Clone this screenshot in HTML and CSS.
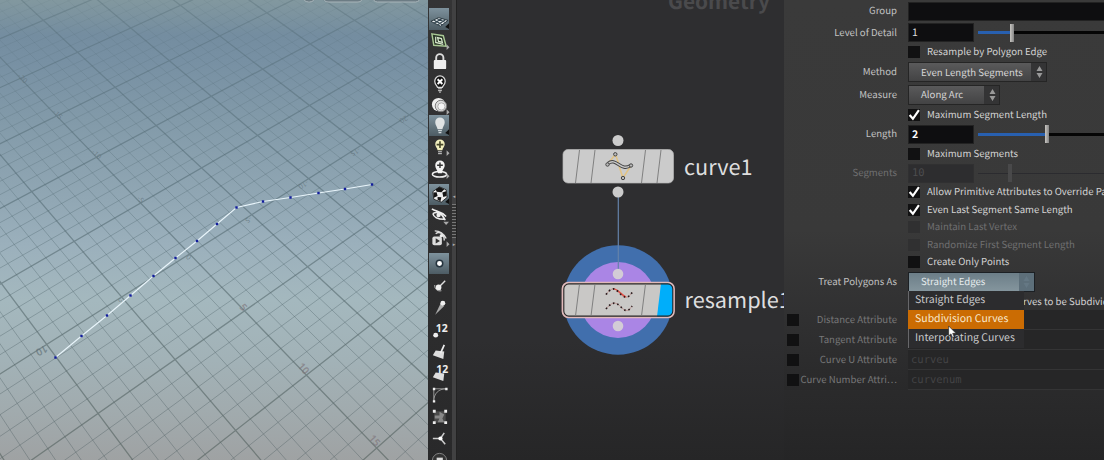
FILE: index.html
```
<!DOCTYPE html>
<html lang="en">
<head>
<meta charset="utf-8">
<title>resample1</title>
<link rel="stylesheet" href="styles.css">
</head>
<body>
<main class="app">
  <section class="viewport">
    <svg class="scene" width="428" height="460" viewBox="0 0 428 460">
      <defs>
        <linearGradient id="fade-minor" gradientUnits="userSpaceOnUse" x1="0" y1="0" x2="0" y2="460">
          <stop offset="0" stop-color="#4a626b" stop-opacity=".1"/>
          <stop offset=".2" stop-color="#4a626b" stop-opacity=".22"/>
          <stop offset=".5" stop-color="#4f676f" stop-opacity=".4"/>
          <stop offset="1" stop-color="#5b686b" stop-opacity=".52"/>
        </linearGradient>
        <linearGradient id="fade-major" gradientUnits="userSpaceOnUse" x1="0" y1="0" x2="0" y2="460">
          <stop offset="0" stop-color="#4a626b" stop-opacity=".3"/>
          <stop offset=".4" stop-color="#4a626b" stop-opacity=".5"/>
          <stop offset="1" stop-color="#55625f" stop-opacity=".62"/>
        </linearGradient>
      </defs>
      <path id="minor" class="grid-minor"/>
      <path id="major" class="grid-major"/>
      <g class="axis-labels">
        <text transform="translate(22 79) rotate(46)">-20</text>
        <text transform="translate(57 115) rotate(46)">-15</text>
        <text transform="translate(96 155) rotate(46)">-10</text>
        <text transform="translate(140 200) rotate(46)">-5</text>
        <text transform="translate(188 258) rotate(46)">0</text>
        <text class="near x" transform="translate(244 307) rotate(48)">5</text>
        <text class="near x" transform="translate(304 368) rotate(48)">10</text>
        <text class="near x" transform="translate(375 440) rotate(48)">15</text>
        <text class="near" transform="translate(42 351) rotate(152)">10</text>
        <text transform="translate(120 300) rotate(150)">5</text>
        <text transform="translate(248 219) rotate(148)">-5</text>
        <text transform="translate(303 184) rotate(148)">-10</text>
        <text transform="translate(355 151) rotate(148)">-15</text>
        <text transform="translate(404 118) rotate(148)">-20</text>
      </g>
      <polyline class="curve" points="55.5,357.5 81.5,336 107,315.5 130.5,295.5 153.5,276 175.5,258 197,241 217,224 236.5,207.5 263,201.5 290.5,197.5 318.5,193 345,189 372,184.5"/>
      <g id="points" class="points"></g>
      <g class="hud">
        <rect x="302.500" y="-12" width="13" height="14" rx="6"/>
        <rect x="323" y="-12" width="40" height="14" rx="5"/>
        <rect x="372.500" y="-12" width="48" height="14" rx="5"/>
      </g>
    </svg>
  </section>

  <nav class="toolbar">
    <button class="tool on" style="height:22px"><svg viewBox="0 0 20 20"><path d="M1 12l8-4 10 3-8 6z" fill="#e9edef" stroke="#26333a"/><path d="M4 10.500l9 5M7 9l9 4M4 14l9-5M8 15.500l8-5" stroke="#334650" stroke-width="1.200"/><path d="M20 14v6l-4-2z" fill="#111"/></svg></button>
    <button class="tool" style="height:20px"><svg viewBox="0 0 20 20"><path d="M2 3l12 2 3 11-13-1z" fill="#2a3527" stroke="#a9c895" stroke-width="1.500"/><path d="M6 6v6l8 2M8 7l4 1 1 4-4-1z" fill="none" stroke="#d6e6cc" stroke-width="1.300"/><path d="M17.500 14l3 3-3 3z" fill="#aaa"/></svg></button>
    <button class="tool" style="height:23px"><svg viewBox="0 0 20 20"><path d="M6.500 9V6a3.800 3.800 0 0 1 7.600 0v3" fill="none" stroke="#ddd" stroke-width="2"/><rect x="4" y="8.500" width="13" height="9.500" rx="1" fill="#eee"/></svg></button>
    <button class="tool" style="height:22px"><svg viewBox="0 0 20 20"><path d="M8 13C7 11 5 9.500 5 6.500a5.500 5.500 0 0 1 11 0C16 9.500 14 11 13 13z" fill="#111" stroke="#ddd" stroke-width="1.300"/><path d="M8 4.500l5 5m0-5l-5 5" stroke="#fff" stroke-width="2"/><path d="M8.500 14.500h4M8.500 16.500h4M9.500 18h2" stroke="#ddd"/></svg></button>
    <button class="tool" style="height:20px"><svg viewBox="0 0 20 20"><circle cx="9" cy="9" r="7" fill="#eee"/><circle cx="11.500" cy="10.500" r="6" fill="#ddd" stroke="#777"/><circle cx="12" cy="11" r="3.800" fill="#f5f5f5" stroke="#999" stroke-width=".8"/><path d="M17.500 14l3 3-3 3z" fill="#aaa"/></svg></button>
    <button class="tool on" style="height:21px"><svg viewBox="0 0 20 20"><path d="M8 14C7.500 11 5.500 9.500 5.500 6.500a5 5 0 0 1 10 0C15.500 9.500 13.500 11 13 14z" fill="#dfe3e4"/><path d="M8.500 15.500h4M9 17.500h3" stroke="#cfd7da" stroke-width="1.300"/><path d="M20 14v6l-4-2z" fill="#111"/></svg></button>
    <button class="tool" style="height:22px"><svg viewBox="0 0 20 20"><path d="M8 13C7.500 10 5.500 9 5.500 6.500a5 5 0 0 1 10 0C15.500 9 13.500 10 13 13z" fill="#f2efbe"/><path d="M10.500 3.500v7M7 7h7" stroke="#464629" stroke-width="1.700"/><path d="M8.500 14.500h4M8.500 16.500h4" stroke="#ddd"/><path d="M17.500 13l3 3-3 3z" fill="#aaa"/></svg></button>
    <button class="tool" style="height:23px"><svg viewBox="0 0 20 20"><ellipse cx="10" cy="15" rx="7.500" ry="3" fill="none" stroke="#eee" stroke-width="1.600"/><path d="M8.500 14C7.500 10 5.500 8.500 5.500 5.500a5 5 0 0 1 10 0C15.500 8.500 13 10 12.500 14z" fill="#f3f3f3"/><path d="M10.500 2.500v6M7.500 5.500h6" stroke="#333" stroke-width="1.500"/><path d="M17.500 14l3 3-3 3z" fill="#aaa"/></svg></button>
    <span class="tool-gap"></span>
    <button class="tool on" style="height:21px"><svg viewBox="0 0 20 20"><path d="M3 7l7-5 7 3 1 8-6 5-8-3z" fill="#eee" stroke="#111" stroke-width=".8"/><path d="M6 4.500L10 2l5 2.500-3 3-5-.5zM13 8l4-1.500 .5 5-3.500 1zM3.500 8L7 7.500l1 4-4 2zM8 12.500l4 .5-1 4-3-1.500z" fill="#151515"/><path d="M20 14v6l-4-2z" fill="#111"/></svg></button>
    <button class="tool" style="height:21px"><svg viewBox="0 0 20 20"><path d="M2 3c4 3 9 2 15 8M3 8c5-3 10 0 13 7M3 8c1 4 6 6 12 6" fill="none" stroke="#eee" stroke-width="1.600"/><circle cx="9" cy="9.500" r="2.300" fill="#eee"/><path d="M14 16.500h6l-3 3.500z" fill="#aaa"/></svg></button>
    <button class="tool" style="height:24px"><svg viewBox="0 0 20 20"><path d="M5 2c5 0 9 2 12 8M6 5c4-3 9 0 9 7" fill="none" stroke="#ddd" stroke-width="1.500"/><circle cx="12" cy="7" r="1.800" fill="#eee"/><rect x="2.500" y="8" width="10" height="9" rx="2" fill="#ddd"/><path d="M6 9.800v5.400l4.500-2.700z" fill="#333"/><path d="M17.500 13l3 3-3 3z" fill="#aaa"/></svg></button>
    <span class="tool-gap"></span>
    <button class="tool on" style="height:21px"><svg viewBox="0 0 20 20"><circle cx="10" cy="10" r="3.400" fill="#fff" stroke="#25343e" stroke-width="1.600"/></svg></button>
    <button class="tool" style="height:22px"><svg viewBox="0 0 20 20"><path d="M9 12l7-7" stroke="#ddd" stroke-width="1.500"/><circle cx="9" cy="12" r="3" fill="#eee"/><path d="M5 9.500c-.5 4 3 7 7 6" fill="none" stroke="#bbb"/></svg></button>
    <button class="tool" style="height:22px"><svg viewBox="0 0 20 20"><path d="M5.500 17.500L11 6l4 2.500z" fill="#aaa"/><circle cx="13.500" cy="5.500" r="2.600" fill="#eee"/></svg></button>
    <button class="tool" style="height:21px"><svg viewBox="0 0 20 20"><circle cx="6" cy="17" r="2.600" fill="#eee"/><text x="6" y="13.500" class="tool-text">12</text></svg></button>
    <button class="tool" style="height:23px"><svg viewBox="0 0 20 20"><path d="M6 10l9 1-1 8-11-4z" fill="#ddd"/><path d="M11 13l4-9" stroke="#eee" stroke-width="1.800"/></svg></button>
    <button class="tool" style="height:21px"><svg viewBox="0 0 20 20"><path d="M6 10l9 1-1 8-11-4z" fill="#ddd"/><text x="6.500" y="11" class="tool-text">12</text></svg></button>
    <button class="tool" style="height:22px"><svg viewBox="0 0 20 20"><path d="M4 17V4h13M4 17C4 9 9 4 17 4" fill="none" stroke="#999"/><path d="M3 3h2.500v2.500H3zM16 3h2.500v2.500H16zM3 16h2.500v2.500H3z" fill="#eee"/></svg></button>
    <button class="tool" style="height:22px"><svg viewBox="0 0 20 20"><rect x="4.500" y="4.500" width="12" height="12" fill="#4b4b4b"/><path d="M10 5l5 3-2 4 2 4H8l2-4H5V9h5z" fill="#888"/><path d="M3 3h3v3H3zM15 3h3v3h-3zM3 15h3v3H3zM15 15h3v3h-3z" fill="#eee"/></svg></button>
    <button class="tool" style="height:23px"><svg viewBox="0 0 20 20"><path d="M11 10H3M11 10l4-6M11 10l5 6" stroke="#ccc" stroke-width="1.600"/><circle cx="11" cy="10" r="2.200" fill="#fff"/></svg></button>
    <button class="tool" style="height:20px"><svg viewBox="0 0 20 20"><circle cx="10" cy="10" r="7.500" fill="#333" stroke="#888"/><rect x="7" y="7" width="6.500" height="6" fill="#ddd"/></svg></button>
  </nav>
  <div class="splitter"><span class="mark">◂</span><span class="grip"></span><span class="mark">▸</span></div>

  <section class="network">
    <svg width="327" height="460" viewBox="457 0 327 460">
      <text class="context" x="668" y="9">Geometry</text>
      <circle cx="618" cy="300" r="54.700" fill="#416fad"/>
      <circle cx="618" cy="300" r="38" fill="#aa85e5"/>
      <path d="M618.300 192v77" stroke="#6583aa" stroke-width="1.200"/>
      <g fill="#cbcbcb"><circle cx="618" cy="140.500" r="5.500"/><circle cx="618" cy="192" r="5.500"/></g>
      <g fill="#d3ccd6"><circle cx="618" cy="274" r="5.300"/><circle cx="618" cy="326" r="5.300"/></g>
      <rect x="563" y="149.500" width="110.500" height="33.500" rx="5" fill="#cbcbcb" stroke="#b4b4b4" stroke-width=".7"/>
      <path d="M579.500 150l-4 33M595 150l-4 33M645.500 150l-4 33M661 150l-4 33" stroke="#777" stroke-width=".9"/>
      <path d="M607.500 164.500l8-10.500 4 12.500M619 166l4 12 8-12.500" fill="none" stroke="#e2c383" stroke-width="1.500"/>
      <path d="M608 163.500c8-7 13 9 22.500 2" fill="none" stroke="#444" stroke-width="3.400"/>
      <path d="M608 163.500c8-7 13 9 22.500 2" fill="none" stroke="#c8c8c8" stroke-width="1.400"/>
      <g fill="#bbb" stroke="#444" stroke-width="1"><circle cx="607.500" cy="164.500" r="1.700"/><circle cx="615.300" cy="154.300" r="1.700"/><circle cx="623" cy="178" r="1.700"/><circle cx="631" cy="165.500" r="1.700"/></g>
      <rect x="562.500" y="282.700" width="111.500" height="34.600" rx="6" fill="#c9c8c6" stroke="#e1b9ba" stroke-width="1.800"/>
      <path d="M661 283.500h7a5 5 0 0 1 5 5v23a5 5 0 0 1-5 5h-11z" fill="#00aefa"/>
      <rect x="563.800" y="283.900" width="109" height="32.200" rx="5" fill="none" stroke="#272323" stroke-width="1.100"/>
      <path d="M579.500 284l-4 32M595 284l-4 32M645.500 284l-4 32" stroke="#777" stroke-width=".9"/>
      <path d="M606 294.500c8-11 11-3 16 1 4 3 7 2 10-3M606 309c8-10 12-5 16-1 4 4 7 3 10-2" fill="none" stroke="#b98683" stroke-width=".8"/>
      <path d="M613 289c4-1 7 5 13 8" fill="none" stroke="#e34f45" stroke-width="1.400"/>
      <path d="M606 294.500c8-11 11-3 16 1 4 3 7 2 10-3M606 309c8-10 12-5 16-1 4 4 7 3 10-2" fill="none" stroke="#27191b" stroke-width="1.700" stroke-dasharray="1.500 3"/>
      <text class="node-name" x="684" y="174.800">curve1</text>
      <text class="node-name" x="684.500" y="308">resample1</text>
    </svg>
  </section>

  <section class="side">
    <div class="params">
      <div class="row h22"><label>Group</label><div class="field wide"></div></div>
      <div class="row h21"><label>Level of Detail</label><div class="field">1</div><div class="slider"><i class="fill" style="width:34px"></i><i class="thumb"></i></div></div>
      <div class="row h18"><label></label><span class="check"></span><span class="caption">Resample by Polygon Edge</span></div>
      <div class="row h22"><label>Method</label><div class="select" style="width:139px"><span>Even Length Segments</span><svg class="arrows" viewBox="0 0 15 18"><path d="M8.500 3l3 5h-6zM8.500 15l3-5h-6z"/></svg></div></div>
      <div class="row h23"><label>Measure</label><div class="select" style="width:92px"><span>Along Arc</span><svg class="arrows" viewBox="0 0 15 18"><path d="M8.500 3l3 5h-6zM8.500 15l3-5h-6z"/></svg></div></div>
      <div class="row h18"><label></label><span class="check"><svg viewBox="0 0 11 11"><path d="M1.500 5.500l3 3.500L10 1"/></svg></span><span class="caption">Maximum Segment Length</span></div>
      <div class="row h20"><label>Length</label><div class="field bold">2</div><div class="slider"><i class="fill" style="width:69px"></i><i class="thumb"></i></div></div>
      <div class="row h19"><label></label><span class="check"></span><span class="caption">Maximum Segments</span></div>
      <div class="row h20 off"><label>Segments</label><div class="field mono">10</div><div class="slider"><i class="fill" style="width:32px"></i><i class="thumb"></i></div></div>
      <div class="row h18"><label></label><span class="check"><svg viewBox="0 0 11 11"><path d="M1.500 5.500l3 3.500L10 1"/></svg></span><span class="caption">Allow Primitive Attributes to Override Pa</span></div>
      <div class="row h17"><label></label><span class="check"><svg viewBox="0 0 11 11"><path d="M1.500 5.500l3 3.500L10 1"/></svg></span><span class="caption">Even Last Segment Same Length</span></div>
      <div class="row h18 off"><label></label><span class="check"></span><span class="caption">Maintain Last Vertex</span></div>
      <div class="row h17 off"><label></label><span class="check"></span><span class="caption">Randomize First Segment Length</span></div>
      <div class="row h17"><label></label><span class="check"></span><span class="caption">Create Only Points</span></div>
      <div class="row h23"><label>Treat Polygons As</label><div class="select open" style="width:127px"><span>Straight Edges</span><svg class="arrows" viewBox="0 0 15 18"><path d="M7.500 3l3 5h-6zM7.500 15l3-5h-6z"/></svg></div></div>
      <div class="row h17"><label></label><span class="caption tail">rves to be Subdivid</span></div>
      <div class="row h20 attr"><span class="check"></span><label>Distance Attribute</label><div class="field ghost"></div></div>
      <div class="row h20 attr"><span class="check"></span><label>Tangent Attribute</label><div class="field ghost"></div></div>
      <div class="row h20 attr"><span class="check"></span><label>Curve U Attribute</label><div class="field ghost">curveu</div></div>
      <div class="row h20 attr"><span class="check"></span><label>Curve Number Attri…</label><div class="field ghost">curvenum</div></div>
      <div class="menu">
        <div class="item">Straight Edges</div>
        <div class="item hot">Subdivision Curves</div>
        <div class="item third">Interpolating Curves</div>
      </div>
      <svg class="cursor" viewBox="0 0 10 15"><path d="M.7.800v11l2.600-2.200 1.800 4 1.800-.8-1.700-3.800h3.700z"/></svg>
    </div>
  </section>
</main>
<script src="grid.js"></script>
</body>
</html>
```

FILE: styles.css
```
* { box-sizing: border-box; }
body { margin: 0; background: #2b2b2d; }
.app { display: flex; width: 1104px; height: 460px; overflow: hidden; font-family: "Noto Sans CJK SC", "Noto Sans", sans-serif; color: #d4d4d4; text-rendering: geometricPrecision; }

.viewport { width: 428px; flex: none; background: linear-gradient(#82989f 0, #748da0 35px, #7790a3 60px, #829aa9 120px, #91a7b4 200px, #9bb0bc 245px, #a4b8be 300px, #a2b2b7 360px, #a1abae 410px, #9fa2a3 460px); }
.scene { display: block; }
.grid-minor, .grid-major { fill: none; }
.grid-minor { stroke: url(#fade-minor); stroke-width: .9; }
.grid-major { stroke: url(#fade-major); stroke-width: 1.300; }
.axis-labels { font: 7px "Noto Sans", sans-serif; fill: #5d6d75; fill-opacity: .65; text-anchor: middle; dominant-baseline: central; }
.axis-labels .near { font-size: 10px; font-weight: 600; }
.axis-labels .x { fill: #7c7379; }
.curve { fill: none; stroke: #e9f5fb; stroke-width: 1.100; }
.points { fill: #111c9c; }
.hud { fill: #6c7c84; stroke: #a9b5ba; }

.toolbar { display: flex; flex-direction: column; flex: none; width: 24px; height: 460px; padding: 8px 3px 0 1px; background: linear-gradient(#343435, #29292a); overflow: hidden; }
.tool { flex: none; width: 20px; padding: 0; border: 0; background: none; display: grid; place-items: center; }
.tool svg { width: 19px; height: 19px; display: block; overflow: visible; }
.tool.on { background: linear-gradient(#7e929d, #4d5c64); }
.tool-gap { flex: none; height: 3px; }
.tool-text { font: 700 11px "Noto Sans", sans-serif; fill: #eee; }

.splitter { flex: none; width: 5px; display: flex; flex-direction: column; align-items: center; gap: 4px; padding-top: 194px; background: #414142; border-right: 1px solid #222; font-size: 5px; line-height: 6px; color: #aaa; }
.grip { width: 4px; height: 34px; background: repeating-linear-gradient(#777 0 1px, #343434 1px 3px); }

.network { flex: none; width: 327px; background: linear-gradient(#2e2e30 0, #2e2e30 340px, #262627 460px); }
.network svg { display: block; }
.context { font-size: 20.800px; font-weight: 700; fill: #4a4a4c; }
.node-name { font-size: 21.700px; fill: #dededf; }

.side { width: 320px; flex: none; background: linear-gradient(#2b2b2c 380px, #252526 460px); }
.params { position: relative; height: 390px; overflow: hidden; background: linear-gradient(#3a3a3a 0, #393939 230px, #303031 320px, #29292a 390px); font-size: 9.630px; line-height: 15px; white-space: nowrap; }
.row { display: flex; align-items: center; }
.row > label { flex: none; width: 113px; margin-right: 11px; text-align: right; color: #c2c2c2; }
.row > label, .caption { padding-bottom: 1px; }
.h17 { height: 17px; } .h18 { height: 18px; } .h19 { height: 19px; } .h20 { height: 20px; } .h21 { height: 21px; } .h22 { height: 22px; } .h23 { height: 23px; }
.field { flex: none; width: 66px; height: 19px; padding: 0 3px; line-height: 17px; background: #0e0e10; border: 1px solid #222; color: #ddd; font-size: 10.500px; }
.field.wide { width: 220px; }
.bold { font-weight: 700; color: #fff; }
.mono { font-family: "DejaVu Sans Mono", monospace; }
.slider { flex: 1; height: 19px; margin-left: 4px; display: flex; align-items: center; background: linear-gradient(#050505, #050505) 0 8px / 100% 3px no-repeat; }
.slider .fill { height: 3px; background: #2860b0; }
.slider .thumb { width: 4px; height: 18px; margin-left: -2px; background: linear-gradient(90deg, #c7c5c1, #858585); }
.check { flex: none; width: 12px; height: 12px; margin-right: 7px; background: #111112; }
.check svg { display: block; width: 12px; height: 12px; fill: none; stroke: #fff; stroke-width: 2; }
.select { display: flex; align-items: center; height: 20px; padding-left: 12px; border: 1px solid #252525; background: linear-gradient(#5a5a5b, #434344); color: #d6d6d6; }
.select span { flex: 1; }
.arrows { flex: none; width: 15px; height: 18px; background: #343435; fill: #999; }
.select.open { background: linear-gradient(#6c7e88, #84959d); border-color: #1c2024; color: #e6ecee; }
.open .arrows { background: #5d6f7a; fill: #657884; }
.off label, .off .caption { color: #707071; }
.off .check { background: #303031; }
.off .field { background: #2d2d2f; color: #4c4c4e; border-color: #303031; }
.off .slider { background: linear-gradient(#2b2b2f, #2b2b2f) 0 9px / 100% 1px no-repeat; }
.off .slider .fill { background: none; }
.off .slider .thumb { background: #49494a; }
.tail { margin-left: 115px; }
.attr { padding-left: 3px; }
.attr .check { margin-right: 0; }
.attr > label { width: 98px; color: #777778; }
.attr .field { width: 200px; height: 20px; line-height: 21px; background: #262627; color: #434345; border: 0; border-bottom: 1px solid #343435; font-family: "DejaVu Sans Mono", monospace; font-size: 10.500px; }
.menu { position: absolute; left: 124px; top: 291px; width: 116px; background: #2c2c2e; border-left: 1px solid #67676a; font-size: 10.500px; color: #c9c9ca; }
.item { height: 19px; line-height: 18px; padding-left: 6px; }
.item.hot { background: #cb6c03; color: #f8e9cf; margin-left: -1px; padding-left: 7px; }
.cursor { position: absolute; left: 164px; top: 325px; width: 9px; height: 14px; fill: #fff; stroke: #222; stroke-width: .7; }
```

FILE: grid.js
```
// Ground plane intersections (u, v) with their screen positions (x, y).
const anchors = [
  [0, 0, 191.5, 255], [5, 0, 246.7, 311], [10, 0, 306.7, 375], [15, 0, 377.3, 448.3],
  [-5, 0, 142, 203], [-10, 0, 98.5, 155], [0, 5, 121.7, 298], [0, 10, 47, 345],
  [0, -5, 254, 215.5], [0, -10, 308, 182], [5, 5, 173, 358], [5, 10, 97, 413],
  [10, 5, 235, 430], [5, -5, 308, 265], [10, -5, 370, 325], [-5, -5, 202, 167],
  [-10, -5, 155, 127], [-5, -10, 255, 135], [-10, -10, 210, 97], [-5, 5, 72, 243],
  [-10, 5, 33, 192], [-5, 10, 0, 282], [-5, -15, 307, 105], [-5, -20, 358, 77], [-10, -15, 265, 68]
];

// Least squares fit of the camera's plane projection.
function fit(samples) {
  const m = Array.from({ length: 8 }, () => new Array(9).fill(0));
  const add = r => {
    for (let i = 0; i < 8; i++) for (let j = 0; j < 9; j++) m[i][j] += r[i] * r[j];
  };
  for (const [u, v, x, y] of samples) {
    add([u, v, 1, 0, 0, 0, -u * x, -v * x, x]);
    add([0, 0, 0, u, v, 1, -u * y, -v * y, y]);
  }
  for (let i = 0; i < 8; i++) {
    let p = i;
    for (let k = i; k < 8; k++) if (Math.abs(m[k][i]) > Math.abs(m[p][i])) p = k;
    [m[i], m[p]] = [m[p], m[i]];
    for (let k = 0; k < 8; k++) {
      if (k === i) continue;
      const f = m[k][i] / m[i][i];
      for (let j = i; j < 9; j++) m[k][j] -= f * m[i][j];
    }
  }
  return m.map((r, i) => r[8] / r[i]);
}

const h = fit(anchors);
const depth = (u, v) => h[6] * u + h[7] * v + 1;
const project = (u, v) => {
  const w = depth(u, v);
  return ((h[0] * u + h[1] * v + h[2]) / w).toFixed(1) + " " + ((h[3] * u + h[4] * v + h[5]) / w).toFixed(1);
};

function line(at) {
  const visible = [];
  for (let t = -60; t <= 60; t++) if (depth(...at(t)) > 0.15) visible.push(t);
  if (visible.length < 2) return "";
  return "M" + project(...at(visible[0])) + "L" + project(...at(visible[visible.length - 1]));
}

let minor = "", major = "";
for (let k = -60; k <= 40; k++) {
  const d = line(t => [k, t]) + line(t => [t, k]);
  if (k % 5) minor += d; else major += d;
}
document.getElementById("minor").setAttribute("d", minor);
document.getElementById("major").setAttribute("d", major);

const group = document.getElementById("points");
for (const p of document.querySelector(".curve").points) {
  const r = document.createElementNS("http://www.w3.org/2000/svg", "rect");
  r.setAttribute("x", p.x - 1.2);
  r.setAttribute("y", p.y - 1.2);
  r.setAttribute("width", 2.4);
  r.setAttribute("height", 2.4);
  group.append(r);
}
```
